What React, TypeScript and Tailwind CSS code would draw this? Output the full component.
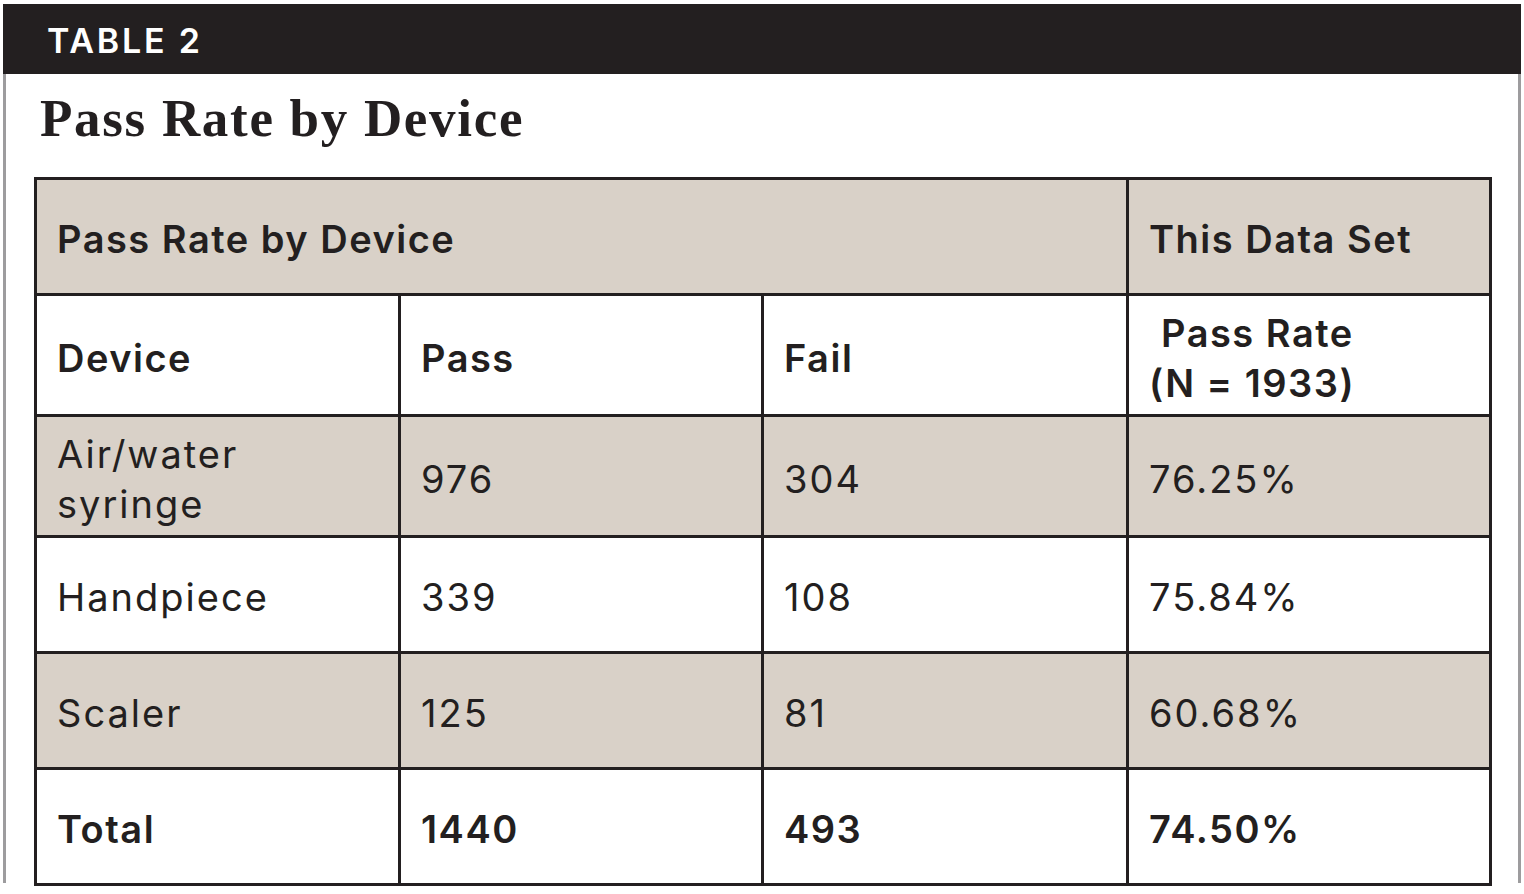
const rows = [
  { device: ["Air/water", "syringe"], pass: "976", fail: "304", rate: "76.25%", shaded: true, h: "h-[118px]" },
  { device: ["Handpiece"], pass: "339", fail: "108", rate: "75.84%", shaded: false, h: "h-[113px]" },
  { device: ["Scaler"], pass: "125", fail: "81", rate: "60.68%", shaded: true, h: "h-[113px]" },
]

function Cell({ children, shaded, bold, className = "" }: { children: React.ReactNode; shaded?: boolean; bold?: boolean; className?: string }) {
  return (
    <div
      className={`${shaded ? "bg-[#d9d1c8]" : "bg-white"} ${bold ? "font-semibold tracking-[1.5px]" : "font-normal tracking-[2px]"} flex items-center pl-[20px] pt-[5px] ${className}`}
    >
      <div className="leading-[50px]">{children}</div>
    </div>
  )
}

export default function App() {
  return (
    <div className="w-[1524px] h-[894px] bg-white pt-[4px] px-[3px] text-[#231f20] font-['Inter',sans-serif]">
      {/* Top bar */}
      <div className="h-[70px] bg-[#231f20] flex items-center pl-[44px] pt-[3px]">
        <span className="text-white text-[34px] font-semibold tracking-[2.8px]">TABLE 2</span>
      </div>

      <div className="h-[809px] pt-[12px] border-x-[3px] border-[#9d9c9e]">
        <h1 className="ml-[34px] text-[53px] leading-[64px] font-bold font-['Liberation_Serif',serif] tracking-[1.7px]">
          Pass Rate by Device
        </h1>

        {/* Table */}
        <div className="mt-[27px] ml-[28px] w-[1458px] bg-[#231f20] p-[3px] grid grid-cols-[361px_360px_362px_360px] gap-[3px] text-[38px]">
          <Cell shaded bold className="col-span-3 h-[113px]">Pass Rate by Device</Cell>
          <Cell shaded bold>This Data Set</Cell>

          <Cell bold className="h-[118px]">Device</Cell>
          <Cell bold>Pass</Cell>
          <Cell bold>Fail</Cell>
          <Cell bold>
            <span className="block pl-[12px]">Pass Rate</span>
            <span className="block">(N = 1933)</span>
          </Cell>

          {rows.map((r) => (
            <>
              <Cell key={r.pass} shaded={r.shaded} className={r.h}>
                {r.device.map((d) => (
                  <span key={d} className="block">{d}</span>
                ))}
              </Cell>
              <Cell shaded={r.shaded}>{r.pass}</Cell>
              <Cell shaded={r.shaded}>{r.fail}</Cell>
              <Cell shaded={r.shaded}>{r.rate}</Cell>
            </>
          ))}

          <Cell bold className="h-[113px]">Total</Cell>
          <Cell bold>1440</Cell>
          <Cell bold>493</Cell>
          <Cell bold>74.50%</Cell>
        </div>
      </div>
    </div>
  )
}
